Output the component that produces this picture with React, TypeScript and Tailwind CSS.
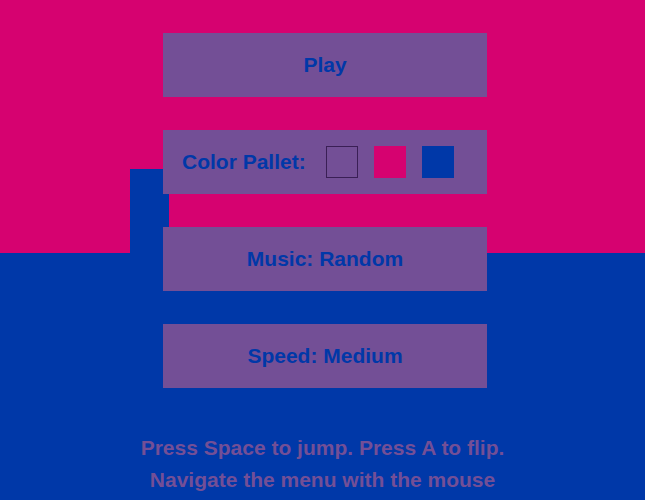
import React from "react";

export default function App() {
  const btn =
    "h-[64px] w-[324px] bg-[#734F96] flex items-center justify-center text-[21px] font-bold text-[#0038A8]";
  return (
    <div
      className="relative w-[645px] h-[500px] overflow-hidden"
      style={{ fontFamily: '"Liberation Sans", Arial, sans-serif' }}
    >
      <div className="absolute inset-0 flex flex-col">
        <div className="h-[253px] bg-[#D60270]" />
        <div className="flex-1 bg-[#0038A8]" />
      </div>
      <div className="absolute left-[130px] top-[169px] w-[39px] h-[84px] bg-[#0038A8]" />
      <div className="relative flex flex-col items-center pt-[33px] gap-[33px] pl-[5px]">
        <div className={btn}>Play</div>
        <div className={btn + " !justify-start pl-[19px]"}>
          <span>Color Pallet:</span>
          <div className="flex gap-[16px] ml-[20px]">
            <div className="w-[32px] h-[32px] border border-[#3a1f55]" />
            <div className="w-[32px] h-[32px] bg-[#D60270]" />
            <div className="w-[32px] h-[32px] bg-[#0038A8]" />
          </div>
        </div>
        <div className={btn}>Music: Random</div>
        <div className={btn}>Speed: Medium</div>
      </div>
      <div className="relative flex flex-col items-center mt-[44px] text-[21px] font-bold text-[#734F96] leading-[32px]">
        <div>Press Space to jump. Press A to flip.</div>
        <div>Navigate the menu with the mouse</div>
      </div>
    </div>
  );
}
